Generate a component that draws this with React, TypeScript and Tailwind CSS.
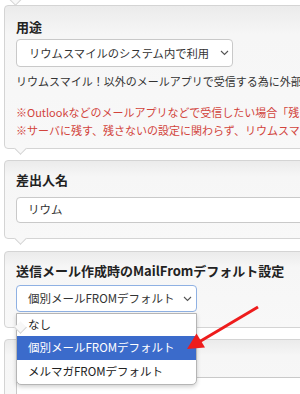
import React from 'react';

const font = { fontFamily: '"Noto Sans CJK JP", "Noto Sans", sans-serif' };

const Chevron: React.FC<{ className?: string }> = ({ className }) => (
  <svg className={className} width="9" height="6" viewBox="0 0 9 6" fill="none">
    <path d="M1 1l3.5 3.5L8 1" stroke="#555" strokeWidth="1.1" />
  </svg>
);

// little speech-bubble tail under each panel
const Notch = () => (
  <div className="absolute left-[11px] -bottom-[5px] w-[9px] h-[9px] rotate-45 bg-[#f8f8f8] border-r border-b border-[#d4d4d4]" />
);

const panel =
  'relative ml-[4px] mr-[-40px] border border-[#d4d4d4] rounded-[4px] bg-linear-to-b from-[#ebebeb] via-[#f6f6f6] via-20% to-[#f8f8f8] pl-[11px]';

const options = ['なし', '個別メールFROMデフォルト', 'メルマガFROMデフォルト'];

export default function App() {
  return (
    <div className="relative w-[300px] h-[394px] overflow-hidden bg-white text-[#333]" style={font}>
      {/* tail of the panel above */}
      <div className="absolute left-[11px] -top-[5px] w-[9px] h-[9px] rotate-45 bg-[#f8f8f8] border-r border-b border-[#d4d4d4]" />

      {/* 用途 */}
      <div className={`${panel} mt-[5px] pt-[13px] pb-[9px]`}>
        <h3 className="text-[13px] leading-[16px] font-bold text-[#222]">用途</h3>
        <div className="mt-[4px] w-[217px] h-[28px] bg-white border border-[#c9c9c9] rounded-[4px] flex items-center justify-between pl-[12px] pr-[3px]">
          <span className="text-[11.3px]">リウムスマイルのシステム内で利用</span>
          <Chevron />
        </div>
        <p className="mt-[5px] text-[11px] leading-[18px] whitespace-nowrap">
          リウムスマイル！以外のメールアプリで受信する為に外部サーバにメールを残す
        </p>
        <p className="mt-[13px] text-[11px] leading-[18px] whitespace-nowrap text-[#d2443c]">
          ※Outlookなどのメールアプリなどで受信したい場合「残す」を選択してください
        </p>
        <p className="text-[11px] leading-[18px] whitespace-nowrap text-[#d2443c]">
          ※サーバに残す、残さないの設定に関わらず、リウムスマイル！では受信されます
        </p>
        <Notch />
      </div>

      {/* 差出人名 */}
      <div className={`${panel} mt-[11px] pt-[11px] pb-[15px]`}>
        <h3 className="text-[13px] leading-[16px] font-bold text-[#222]">差出人名</h3>
        <div className="mt-[9px] h-[26px] bg-white border border-[#c9c9c9] rounded-[4px] flex items-center pl-[11px]">
          <span className="text-[11.5px]">リウム</span>
        </div>
        <Notch />
      </div>

      {/* MailFrom default */}
      <div className={`${panel} mt-[12px] pt-[11px] pb-[15px] z-10`}>
        <h3 className="text-[13px] leading-[16px] font-bold text-[#222] whitespace-nowrap">
          送信メール作成時のMailFromデフォルト設定
        </h3>
        <div className="relative mt-[6px] w-[181px]">
          <div className="h-[27px] bg-white border border-[#8fb1e3] rounded-[4px] flex items-center justify-between pl-[11px] pr-[4px]">
            <span className="text-[11.5px]">個別メールFROMデフォルト</span>
            <Chevron />
          </div>
          <ul className="absolute left-0 top-[28px] w-[181px] bg-white border border-[#b5b5b5] rounded-b-[5px] shadow-[0_2px_4px_rgba(0,0,0,0.18)] text-[11.5px] overflow-hidden">
            {options.map((o, i) => (
              <li
                key={o}
                className={`flex items-center pl-[11px] ${i === 0 ? 'h-[22px]' : 'h-[24px]'} ${
                  i === 1 ? 'bg-[#3b6bcb] text-white' : 'text-[#222]'
                }`}
              >
                {o}
              </li>
            ))}
          </ul>
        </div>
        <Notch />
      </div>

      {/* next panel, mostly hidden */}
      <div className={`${panel} mt-[11px] pt-[37px] pb-[15px]`}>
        <div className="h-[26px] bg-white border border-[#c9c9c9] rounded-[4px]" />
      </div>

      {/* red annotation arrow */}
      <svg className="absolute inset-0 z-20 pointer-events-none" width="300" height="394" viewBox="0 0 300 394">
        <line x1="258" y1="307" x2="199" y2="342" stroke="#ee1c1c" strokeWidth="3" />
        <polygon points="187,349 196.5,333.5 205,347.5" fill="#ee1c1c" />
      </svg>
    </div>
  );
}
